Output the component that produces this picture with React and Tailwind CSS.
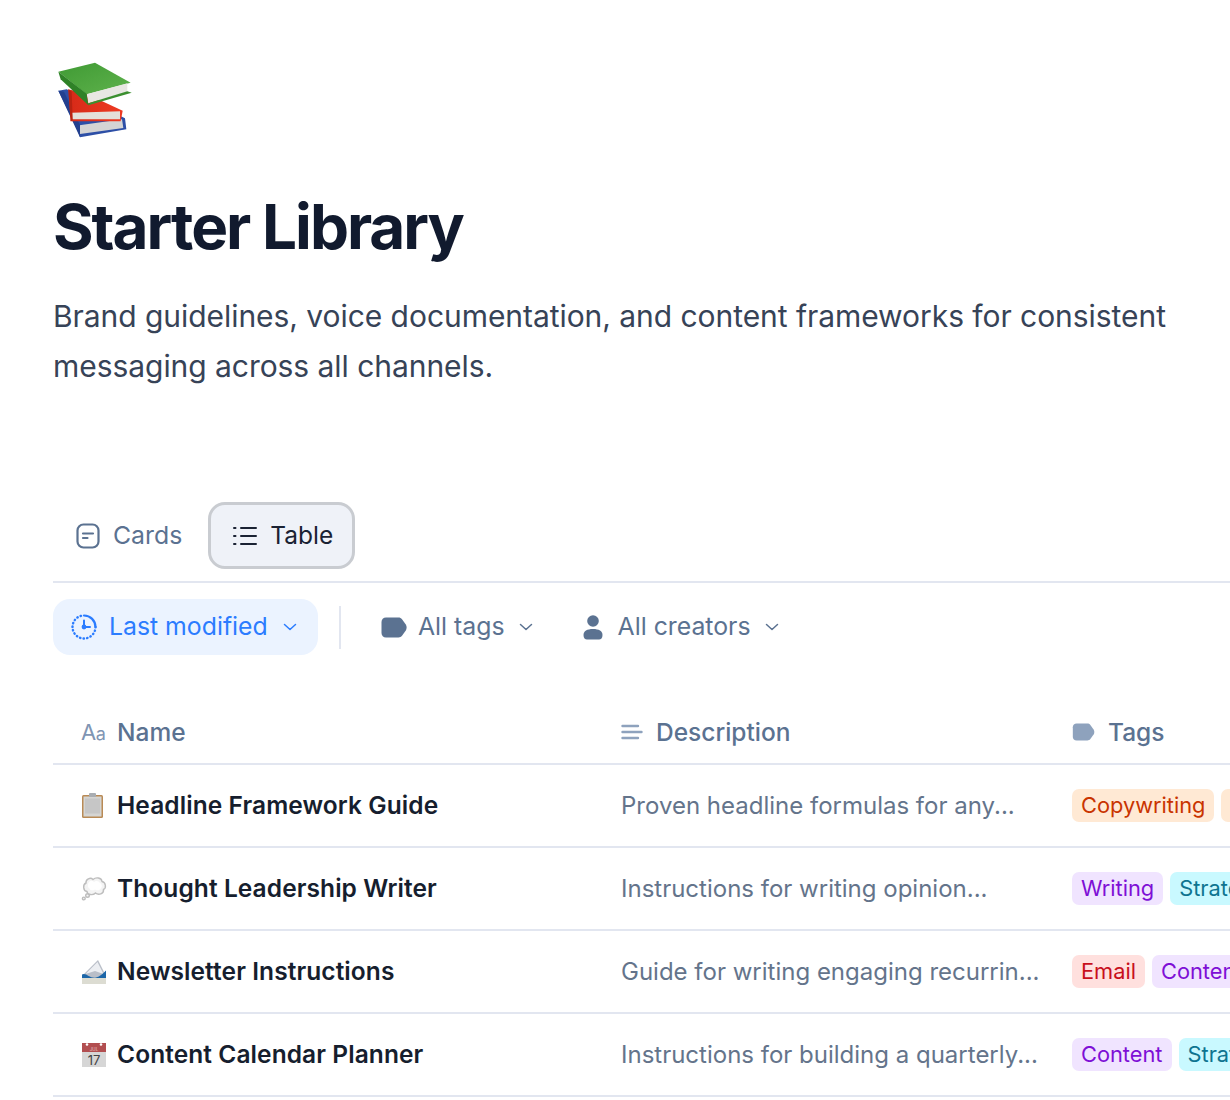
import React from 'react';

const BooksEmoji = () => (
  <svg width="74" height="76" viewBox="54 36 222 228" className="block ml-[5px] mt-[2px]">
    <defs>
      <linearGradient id="greenTop" x1="0" y1="0" x2="1" y2="1">
        <stop offset="0" stopColor="#3f9a34" />
        <stop offset="1" stopColor="#5fb24c" />
      </linearGradient>
      <linearGradient id="redTop" x1="0" y1="0" x2="1" y2="0">
        <stop offset="0" stopColor="#d62a18" />
        <stop offset="1" stopColor="#ee3a22" />
      </linearGradient>
    </defs>
    {/* blue book */}
    <path d="M55 122 L80 118 L255 205 L259 238 L120 262 L112 240 Z" fill="#2d4fa6" />
    <path d="M118 226 L246 208 L250 234 L120 252 Z" fill="#d4d4d4" />
    <path d="M55 122 L72 125 L120 225 L120 262 Z" fill="#23408f" />
    {/* red book */}
    <path d="M85 118 L140 132 L248 182 L242 214 L92 214 Z" fill="url(#redTop)" />
    <path d="M96 188 L240 184 L240 208 L97 208 Z" fill="#e4e0da" />
    <path d="M85 118 L95 125 L98 210 L92 214 Z" fill="#b82312" />
    {/* green book */}
    <path d="M55 65 L165 38 L272 98 L140 133 Z" fill="url(#greenTop)" />
    <path d="M140 133 L262 100 L262 125 L145 160 Z" fill="#e8e7e2" />
    <path d="M145 160 L262 124 L275 128 L145 166 Z" fill="#3b8f2f" />
    <path d="M55 65 L140 131 L145 166 L62 88 Z" fill="#2f8227" />
  </svg>
);

const ClipboardEmoji = () => (
  <svg width="24" height="28" viewBox="0 0 24 28" className="block">
    <rect x="1" y="3" width="21" height="23" rx="1.5" fill="#b98a55" />
    <rect x="2.5" y="4.5" width="18" height="20" fill="#d5d5d3" />
    <rect x="4" y="6.5" width="15" height="15" fill="#c6c6c6" />
    <rect x="8" y="1" width="7" height="4" rx="1" fill="#a9adb2" />
  </svg>
);

const ThoughtEmoji = () => (
  <svg width="26" height="26" viewBox="0 0 26 26" className="block">
    <g fill="#f4f4f4" stroke="#bdbdbd" strokeWidth="1.4">
      <circle cx="2.8" cy="22.5" r="1.4" />
      <circle cx="6.5" cy="19.5" r="1.8" />
      <path d="M5 7 C4.5 3 9.5 1 12 3.5 C15 0.8 20.5 1.5 21 5.5 C25 6.5 25.5 12 22.5 13.5 C23 18 17.5 19.5 14.5 17 C11.5 20 6 18.5 6 15.5 C2 15 1.5 8.5 5 7 Z" />
    </g>
    <path d="M8 6 C10 4 12 5 13 6 C15 4 18 5 19 7 C21 8 21.5 11 20 12 C19 14.5 16 15 14 13.5 C12 15 9 14.5 8.5 12.5 C6.5 11.5 6.5 8 8 6 Z" fill="#ffffff" />
  </svg>
);

const EnvelopeEmoji = () => (
  <svg width="26" height="26" viewBox="0 0 26 26" className="block">
    <path d="M2 16 L17 1 L25 17 L12 22 Z" fill="#b9bec8" />
    <path d="M4.5 15 L16.5 3 L22.5 15 L14 12 Z" fill="#eceef2" />
    <path d="M1 15.5 C5 13 9 20 15 18.5 C19 17.5 22 14.5 25 11.5 L25 20 L1 20 Z" fill="#1c66a8" />
    <rect x="1" y="19" width="24" height="6" fill="#dcdcd2" />
  </svg>
);

const CalendarEmoji = () => (
  <svg width="26" height="26" viewBox="0 0 26 26" className="block">
    <rect x="1" y="1" width="24" height="24" fill="#d6d6d6" />
    <rect x="1" y="1" width="24" height="9" fill="#b24e50" />
    <circle cx="6" cy="2.5" r="1.3" fill="#fff" />
    <circle cx="20" cy="2.5" r="1.3" fill="#fff" />
    <text x="13" y="8.5" textAnchor="middle" fontSize="4.5" fill="#e8c4c4" fontFamily="Inter, sans-serif">JUL</text>
    <text x="13" y="22.5" textAnchor="middle" fontSize="13" fill="#444" fontFamily="Inter, sans-serif">17</text>
  </svg>
);

const CardsIcon = () => (
  <svg width="24" height="26" viewBox="0 0 24 26" fill="none" stroke="#5b7291" strokeWidth="2.2" strokeLinecap="round">
    <rect x="1.5" y="1.5" width="21" height="23" rx="6" />
    <path d="M7 10.5 H17 M7 15 H11.5" />
  </svg>
);

const ListIcon = () => (
  <svg width="24" height="20" viewBox="0 0 24 20" fill="none" stroke="#1a2233" strokeWidth="2" strokeLinecap="round">
    <path d="M8 2 H23 M8 10 H23 M8 18 H23" />
    <path d="M1 2 H2.5 M1 10 H2.5 M1 18 H2.5" />
  </svg>
);

const ClockIcon = () => (
  <svg width="26" height="26" viewBox="0 0 26 26" fill="none" stroke="#2b7cff">
    <path d="M24.5 13 A11.5 11.5 0 1 1 13 1.5" strokeWidth="2.4" strokeDasharray="0.4 3.2" strokeLinecap="round" />
    <path d="M13 1.5 A11.5 11.5 0 0 1 24.5 13" strokeWidth="2.2" strokeLinecap="round" />
    <path d="M13 6.5 V13 H19" strokeWidth="2" strokeLinecap="round" />
    <circle cx="13" cy="13" r="2.4" fill="#2b7cff" stroke="none" />
  </svg>
);

const Chevron = ({ color }) => (
  <svg width="14" height="8" viewBox="0 0 14 8" fill="none" stroke={color} strokeWidth="1.5" strokeLinecap="round" strokeLinejoin="round">
    <path d="M1.5 1.5 L7 6.5 L12.5 1.5" />
  </svg>
);

const TagIcon = ({ color, w = 26, h = 21 }) => (
  <svg width={w} height={h} viewBox="0 0 26 21">
    <path d="M5 0.5 H17.5 C19 0.5 20 1 21 2.2 L24.8 7.5 C25.9 9.2 25.9 11.8 24.8 13.5 L21 18.8 C20 20 19 20.5 17.5 20.5 H5 C2.3 20.5 0.5 18.7 0.5 16 V5 C0.5 2.3 2.3 0.5 5 0.5 Z" fill={color} />
  </svg>
);

const PersonIcon = () => (
  <svg width="20" height="25" viewBox="0 0 20 25" fill="#5b7291">
    <circle cx="10" cy="6" r="5.8" />
    <path d="M0.5 20 C0.5 16 4 14 10 14 C16 14 19.5 16 19.5 20 C19.5 23 18 24.5 16 24.5 H4 C2 24.5 0.5 23 0.5 20 Z" />
  </svg>
);

const NameIcon = () => (
  <span className="w-[25px] text-[22px] leading-none font-normal text-[#7f95b3] tracking-[-0.5px]">
    A<span className="text-[18px]">a</span>
  </span>
);

const DescIcon = () => (
  <svg width="22" height="16" viewBox="0 0 22 16" fill="none" stroke="#8ea2bd" strokeWidth="2.4" strokeLinecap="round">
    <path d="M1.5 2 H17 M1.5 8 H20.5 M1.5 14 H17" />
  </svg>
);

const tagStyles = {
  Copywriting: 'bg-[#ffe9d4] text-[#c93400]',
  Writing: 'bg-[#f0e4ff] text-[#7e0fd6]',
  Content: 'bg-[#f0e4ff] text-[#7e0fd6]',
  Strategy: 'bg-[#c9f9ff] text-[#0e7490]',
  Email: 'bg-[#ffe0de] text-[#c8101c]',
};

const Tag = ({ label }) => (
  <span className={`h-[33px] shrink-0 rounded-[7px] px-[9px] flex items-center text-[21.8px] ${tagStyles[label]}`}>
    {label}
  </span>
);

const rows = [
  {
    emoji: <ClipboardEmoji />,
    name: 'Headline Framework Guide',
    desc: 'Proven headline formulas for any...',
    tags: ['Copywriting', 'Copywriting'],
  },
  {
    emoji: <ThoughtEmoji />,
    name: 'Thought Leadership Writer',
    desc: 'Instructions for writing opinion...',
    tags: ['Writing', 'Strategy'],
  },
  {
    emoji: <EnvelopeEmoji />,
    name: 'Newsletter Instructions',
    desc: 'Guide for writing engaging recurrin...',
    tags: ['Email', 'Content'],
  },
  {
    emoji: <CalendarEmoji />,
    name: 'Content Calendar Planner',
    desc: 'Instructions for building a quarterly...',
    tags: ['Content', 'Strategy'],
  },
];

const App = () => {
  return (
    <div className="w-[1230px] h-[1100px] overflow-hidden bg-white pl-[53px] pt-[60px] font-['Inter',sans-serif] text-[#111827]">
      <div className="w-[1177px]">
        <div className="h-[80px]">
          <BooksEmoji />
        </div>
        <h1 className="mt-[49px] text-[62px] leading-[72px] font-bold tracking-[-2px] text-[#111a2e]">Starter Library</h1>
        <p className="mt-[28px] w-[1150px] text-[30px] leading-[50px] tracking-[-0.05px] text-[#374357]">
          Brand guidelines, voice documentation, and content frameworks for consistent messaging across all channels.
        </p>

        <div className="mt-[111px] flex items-center h-[67px]">
          <button className="h-[67px] px-[23px] flex items-center gap-[13px] text-[24.8px] text-[#5b7291]">
            <CardsIcon />
            Cards
          </button>
          <button className="ml-[3px] h-[67px] w-[147px] rounded-[17px] border-[3px] border-[#c9ccd1] bg-[#eff2f8] pl-[22px] flex items-center gap-[13px] text-[24.5px] text-[#1a2233]">
            <ListIcon />
            Table
          </button>
        </div>
        <div className="mt-[12px] h-[2px] bg-[#e2e6f0]" />

        <div className="mt-[16px] flex items-center">
          <button className="h-[56px] w-[265px] rounded-[17px] bg-[#ebf3ff] pl-[18px] flex items-center text-[24.8px] text-[#2b7cff]">
            <ClockIcon />
            <span className="ml-[12px]">Last modified</span>
            <span className="ml-[15px]"><Chevron color="#2b7cff" /></span>
          </button>
          <div className="ml-[21px] h-[43px] w-[2px] bg-[#e2e6f0]" />
          <div className="ml-[40px] flex items-center text-[24.8px] text-[#5b7291]">
            <TagIcon color="#5b7291" />
            <span className="ml-[11px]">All tags</span>
            <span className="ml-[14px]"><Chevron color="#5b7291" /></span>
          </div>
          <div className="ml-[50px] flex items-center text-[24.8px] text-[#5b7291]">
            <PersonIcon />
            <span className="ml-[15px]">All creators</span>
            <span className="ml-[14px]"><Chevron color="#5b7291" /></span>
          </div>
        </div>

        <div className="mt-[50px] h-[60px] pb-[4px] grid grid-cols-[568px_451px_158px] border-b-2 border-[#e2e6f0] text-[24.5px] text-[#5b7291] font-medium">
          <div className="pl-[28px] flex items-center gap-[11px]">
            <NameIcon />
            Name
          </div>
          <div className="flex items-center gap-[13px]">
            <DescIcon />
            Description
          </div>
          <div className="flex items-center gap-[13px]">
            <TagIcon color="#8ea2bd" w={23} h={18} />
            Tags
          </div>
        </div>

        {rows.map((row) => (
          <div key={row.name} className="h-[83px] grid grid-cols-[568px_451px_158px] items-center border-b-2 border-[#e2e6f0]">
            <div className="pl-[28px] flex items-center">
              <span className="w-[36px] flex items-center">{row.emoji}</span>
              <span className="text-[24.5px] font-semibold tracking-[0.08px] text-[#161e2e]">{row.name}</span>
            </div>
            <div className="text-[24px] text-[#64748b] whitespace-nowrap">{row.desc}</div>
            <div className="flex gap-[7px] overflow-hidden">
              {row.tags.map((t, i) => (
                <Tag key={i} label={t} />
              ))}
            </div>
          </div>
        ))}
      </div>
    </div>
  );
};

export default App;
